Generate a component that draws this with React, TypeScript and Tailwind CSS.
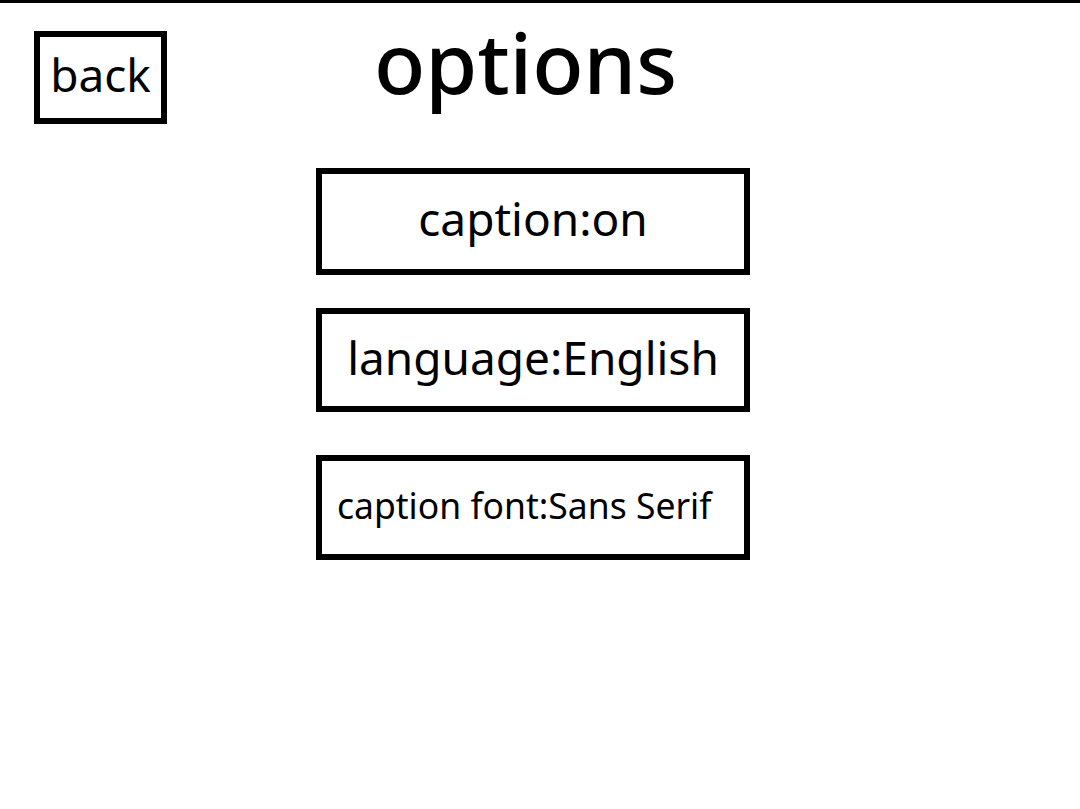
export default function App() {
  return (
    <div className="min-h-[809px] border-t-[3px] border-black bg-white text-black font-['Noto_Sans',sans-serif]">
      <div className="flex items-start">
        <button className="ml-[34px] mt-[28px] flex h-[93px] w-[133px] items-center justify-center border-[6px] border-black pb-[7px] text-[46px] leading-none">
          back
        </button>
        <h1 className="ml-[207px] mt-[9px] text-[84px] font-medium leading-[100px]">options</h1>
      </div>
      <div className="ml-[316px] mt-[44px] flex w-[434px] flex-col">
        <button className="flex h-[107px] items-center justify-center border-[6px] border-black pb-[6px] text-[46px]">
          caption:on
        </button>
        <button className="mt-[33px] flex h-[104px] items-center justify-center border-[6px] border-black pb-[6px] text-[46px]">
          language:English
        </button>
        <button className="mt-[43px] flex h-[105px] items-center border-[6px] border-black pb-[4px] pl-[15px] text-[35.5px]">
          caption font:Sans Serif
        </button>
      </div>
    </div>
  );
}
